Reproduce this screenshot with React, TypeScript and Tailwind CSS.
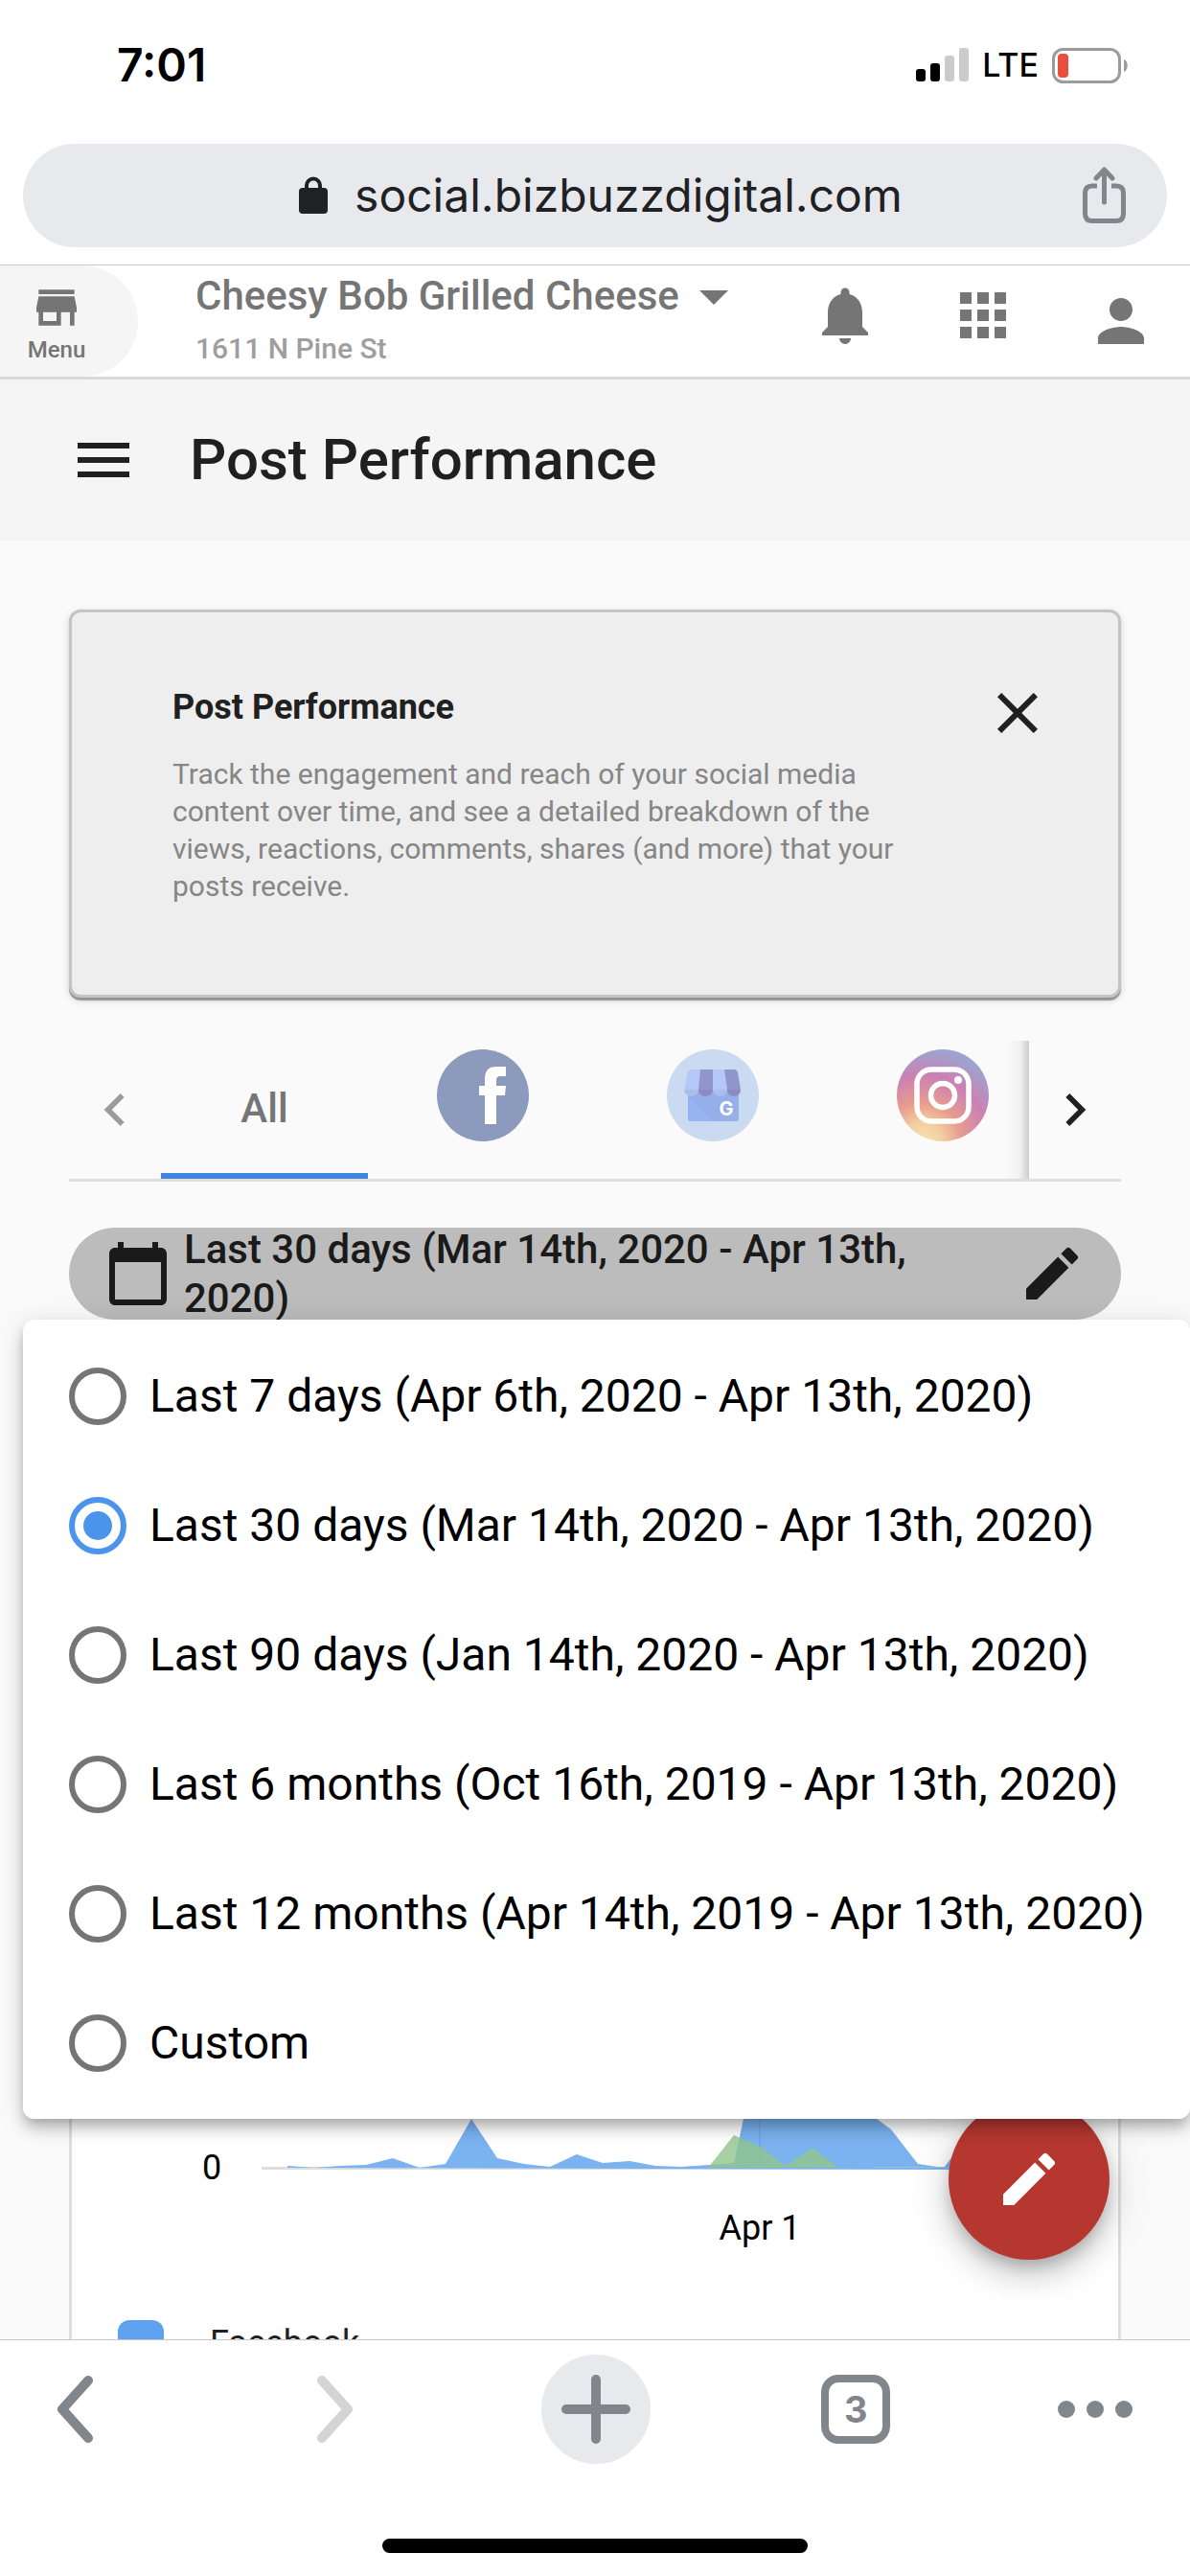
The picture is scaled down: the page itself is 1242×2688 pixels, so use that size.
import React, { useState } from "react";
import {
  MdApps,
  MdArrowDropDown,
  MdCalendarToday,
  MdChevronLeft,
  MdChevronRight,
  MdClose,
  MdCreate,
  MdMenu,
  MdNotifications,
  MdPerson,
  MdStore,
} from "react-icons/md";

const dateRanges = [
  { id: "7d", label: "Last 7 days (Apr 6th, 2020 - Apr 13th, 2020)" },
  { id: "30d", label: "Last 30 days (Mar 14th, 2020 - Apr 13th, 2020)" },
  { id: "90d", label: "Last 90 days (Jan 14th, 2020 - Apr 13th, 2020)" },
  { id: "6m", label: "Last 6 months (Oct 16th, 2019 - Apr 13th, 2020)" },
  { id: "12m", label: "Last 12 months (Apr 14th, 2019 - Apr 13th, 2020)" },
  { id: "custom", label: "Custom" },
];

const StatusBar: React.FC = () => (
  <div className="flex h-[150px] items-start justify-between pt-10 pr-16 pl-[122px] font-['Inter',sans-serif] text-black">
    <span className="text-[48px] leading-[56px] font-semibold">7:01</span>
    <div className="flex h-14 items-center gap-3.5">
      <svg className="h-9 w-[55px]" viewBox="0 0 55 36">
        <rect x="0" y="22" width="10" height="13" rx="3" />
        <rect x="15" y="16" width="10" height="19" rx="3" />
        <rect x="30" y="8" width="10" height="27" rx="3" fill="#cbcbcb" />
        <rect x="45" y="0" width="10" height="35" rx="3" fill="#cbcbcb" />
      </svg>
      <span className="text-[34px] leading-[56px] font-medium">LTE</span>
      <svg className="h-[37px] w-20" viewBox="0 0 80 37">
        <rect
          x="1.5"
          y="1.5"
          width="69"
          height="34"
          rx="10"
          fill="none"
          stroke="#9b9b9b"
          strokeWidth="3"
        />
        <rect x="6" y="6" width="11" height="25" rx="4" fill="#ea4e3d" />
        <path d="M75 12c5 2 5 11 0 13z" fill="#9b9b9b" />
      </svg>
    </div>
  </div>
);

const AddressBar: React.FC = () => (
  <div className="mx-6 mb-[18px] flex h-[108px] items-center rounded-full bg-[#e8e9ec] pr-[43px] pl-[100px]">
    <div className="flex flex-1 items-center justify-center gap-7 font-['Inter',sans-serif] text-[48px] leading-[60px] text-[#202124]">
      <svg className="h-10 w-[30px]" viewBox="0 0 30 40" fill="none">
        <path
          d="M8 16V9.500a7 7 0 0 1 14 0V16"
          stroke="#202124"
          strokeWidth="4"
        />
        <rect y="12" width="30" height="27" rx="4" fill="#202124" />
      </svg>
      <span>social.bizbuzzdigital.com</span>
    </div>
    <button type="button" aria-label="Share">
      <svg
        className="h-[60px] w-[45px]"
        viewBox="0 0 45 60"
        fill="none"
        stroke="#80868b"
        strokeWidth="5"
        strokeLinecap="round"
        strokeLinejoin="round"
      >
        <path
          d="M15 20H10q-7.500 0-7.500 7.500V49q0 7.500 7.500 7.500h25q7.500 0 7.500-7.500V27.500q0-7.500-7.500-7.500h-5"
          strokeLinecap="butt"
        />
        <path d="M22.500 37V4M14 12l8.500-9 8.500 9" />
      </svg>
    </button>
  </div>
);

const AppBar: React.FC = () => (
  <header className="flex h-30 items-stretch border-t border-b-3 border-t-[#c8c8c8] border-b-[#d9d9d9] bg-white text-[#757575]">
    <button
      type="button"
      className="flex w-36 flex-col items-center gap-0.5 rounded-r-full bg-[#f5f5f5] pt-4 pr-[26px]"
    >
      <MdStore className="size-14" />
      <span className="text-[24px] leading-7 font-medium">Menu</span>
    </button>
    <button
      type="button"
      className="flex flex-1 flex-col items-start gap-2 pt-[5px] pl-[60px]"
    >
      <span className="flex items-center text-[42px] leading-[54px] font-medium">
        Cheesy Bob Grilled Cheese
        <MdArrowDropDown className="-my-3 size-[72px]" />
      </span>
      <span className="text-[30px] leading-10 font-medium text-[#9e9e9e]">
        1611 N Pine St
      </span>
    </button>
    <nav className="flex items-start gap-[72px] pt-4 pr-9">
      <button type="button" aria-label="Notifications">
        <MdNotifications className="size-[72px]" />
      </button>
      <button type="button" aria-label="Apps">
        <MdApps className="size-[72px]" />
      </button>
      <button type="button" aria-label="Account" className="pt-1.5">
        <MdPerson className="size-[72px]" />
      </button>
    </nav>
  </header>
);

const InfoCard: React.FC = () => (
  <section className="flex h-[405px] items-start justify-between rounded-xl border-3 border-[#c4c4c4] bg-[#eeeeee] pt-[69px] pr-[69px] pl-[105px] shadow-[0_3px_1px_0_rgba(0,0,0,0.35),0_3px_9px_0_rgba(0,0,0,0.14)]">
    <div className="max-w-[770px]">
      <h2 className="pt-1.5 text-[36px] leading-[48px] font-bold text-[#202020]">
        Post Performance
      </h2>
      <p className="pt-[26px] text-[30px] leading-[39px] text-[#868686]">
        Track the engagement and reach of your social media content over time,
        and see a detailed breakdown of the views, reactions, comments, shares
        (and more) that your posts receive.
      </p>
    </div>
    <button type="button" aria-label="Close" className="text-[#202020]">
      <MdClose className="size-[72px]" />
    </button>
  </section>
);

const FacebookLogo: React.FC = () => (
  <svg className="size-24" viewBox="0 0 96 96">
    <circle cx="48" cy="48" r="48" fill="#8b9abd" />
    <path
      d="M50 78V48h-6V38h6v-7c0-9 4-13 12-13h10v10h-6c-3 0-4 2-4 4v6h10l-1 10h-9v30z"
      fill="#fff"
    />
  </svg>
);

const MyBusinessLogo: React.FC = () => (
  <svg className="size-24" viewBox="0 0 96 96">
    <circle cx="48" cy="48" r="48" fill="#cadaf1" />
    <path d="M22 40h53v32q0 3-3 3H25q-3 0-3-3z" fill="#96afe8" />
    <path d="M22 49l26 26H25q-3 0-3-3z" fill="#98b5f3" />
    <path d="M26 21h9l-2 21H18l4-18q1-3 4-3z" fill="#b3c8f6" />
    <path d="M35 21h13v21H33z" fill="#9096cc" />
    <path d="M48 21h12l3 21H48z" fill="#b3c8f6" />
    <path d="M60 21h10q3 0 4 3l3 18H63z" fill="#9096cc" />
    <path d="M18 42h15a7.500 7 0 0 1-15 0z" fill="#a9bee9" />
    <path d="M33 42h15a7.500 7 0 0 1-15 0z" fill="#898dc3" />
    <path d="M48 42h15a7.500 7 0 0 1-15 0z" fill="#a9bee9" />
    <path d="M63 42h14a7 7 0 0 1-14 0z" fill="#898dc3" />
    <text
      x="62"
      y="69"
      textAnchor="middle"
      className="fill-white font-['Inter',sans-serif] text-[20px] font-bold"
    >
      G
    </text>
  </svg>
);

const InstagramLogo: React.FC = () => (
  <svg className="size-24" viewBox="0 0 96 96">
    <defs>
      <radialGradient id="insta" cx="0.28" cy="1" r="1.05">
        <stop offset="0.05" stopColor="#f5dfa9" />
        <stop offset="0.2" stopColor="#f2cfa0" />
        <stop offset="0.4" stopColor="#e89c8d" />
        <stop offset="0.68" stopColor="#cc80b4" />
        <stop offset="0.96" stopColor="#9ba5cf" />
      </radialGradient>
    </defs>
    <circle cx="48" cy="48" r="48" fill="url(#insta)" />
    <g fill="none" stroke="#fff" strokeWidth="5.500">
      <rect x="21" y="21" width="54" height="54" rx="15" />
      <circle cx="48" cy="48" r="12.500" />
    </g>
    <circle cx="64" cy="32" r="4" fill="#fff" />
  </svg>
);

const NetworkTabs: React.FC = () => (
  <div
    role="tablist"
    className="mt-[45px] flex h-[147px] border-b-3 border-[#dedede]"
  >
    <button
      type="button"
      aria-label="Previous tabs"
      className="flex w-24 items-center justify-center text-[#9b9b9b]"
    >
      <MdChevronLeft className="size-[68px]" />
    </button>
    <div className="flex min-w-0 flex-1 overflow-hidden">
      <button
        type="button"
        role="tab"
        aria-selected="true"
        className="w-[216px] shrink-0 border-b-6 border-[#4285de] pt-0.5 text-center text-[42px] font-medium text-[#757575]"
      >
        All
      </button>
      {[
        { name: "Facebook", Logo: FacebookLogo },
        { name: "Google My Business", Logo: MyBusinessLogo },
        { name: "Instagram", Logo: InstagramLogo },
      ].map(({ name, Logo }) => (
        <button
          key={name}
          type="button"
          role="tab"
          aria-selected="false"
          aria-label={name}
          className="flex w-60 shrink-0 justify-center pt-[9px]"
        >
          <Logo />
        </button>
      ))}
    </div>
    <div className="relative w-24">
      <div className="absolute inset-y-0 -left-6 w-6 bg-linear-to-r from-transparent via-black/4 via-60% to-black/18" />
      <button
        type="button"
        aria-label="Next tabs"
        className="flex h-full w-24 items-center justify-center text-[#202020]"
      >
        <MdChevronRight className="size-[68px]" />
      </button>
    </div>
  </div>
);

const DateRangePicker: React.FC = () => {
  const [selected, setSelected] = useState("30d");

  return (
    <div className="relative z-20 mt-12">
      <button
        type="button"
        className="flex h-24 w-full items-center rounded-full bg-[#bcbcbc] px-9 text-left text-[#1a1a1a]"
      >
        <MdCalendarToday className="size-[72px] shrink-0" />
        <span className="flex-1 pr-20 pl-3 text-[42px] leading-[51px] font-medium">
          Last 30 days (Mar 14th, 2020 - Apr 13th, 2020)
        </span>
        <MdCreate className="size-[72px] shrink-0" />
      </button>
      <fieldset className="absolute top-full -right-[72px] -left-12 rounded-xl bg-white py-3 shadow-[0_6px_12px_-3px_rgba(0,0,0,0.2),0_12px_15px_0_rgba(0,0,0,0.14),0_3px_30px_0_rgba(0,0,0,0.12)]">
        {dateRanges.map(({ id, label }) => (
          <label
            key={id}
            className="flex h-[135px] items-center gap-6 pl-12 text-[48px] leading-[60px] whitespace-nowrap text-black"
          >
            <input
              type="radio"
              name="range"
              value={id}
              checked={selected === id}
              onChange={() => setSelected(id)}
              className="flex size-[60px] appearance-none items-center justify-center rounded-full border-6 border-[#757575] checked:border-[#4a94ec] checked:before:size-[30px] checked:before:rounded-full checked:before:bg-[#4a94ec] checked:before:content-['']"
            />
            {label}
          </label>
        ))}
      </fieldset>
    </div>
  );
};

const ChartCard: React.FC = () => (
  <section className="mt-12 border-3 border-[#dedede] bg-white">
    <svg className="w-full" viewBox="0 0 1092 993">
      <path d="M198 834.500H1018" stroke="#dedede" strokeWidth="3" />
      <path
        d="M225 834v-2l28 2 27-2 27-1 28-7 28 10 27-4 27-47 27 41 28 6 27 3 28-13 27 9 28-2 27 5 27 1 29-2 26-2 10-46 40-120 80 60 19 60 15 11 28 36 27 4 35-46v48z"
        fill="#7ab3f0"
      />
      <path d="M718 700V834" stroke="#70a9e8" strokeWidth="2" />
      <path
        d="M664 834l27-34 27 12 27 20 28-19 27 21z"
        fill="#91c58b"
        fillOpacity="0.8"
      />
      <path d="M838 833.500H915" stroke="#9dc4c4" />
      <text
        x="136"
        y="846"
        className="fill-black font-['Roboto',sans-serif] text-[36px]"
      >
        0
      </text>
      <text
        x="718"
        y="909"
        textAnchor="middle"
        className="fill-black font-['Roboto',sans-serif] text-[36px]"
      >
        Apr 1
      </text>
    </svg>
    <div className="flex h-12 items-center gap-12 pl-12 text-[36px] leading-[48px] text-[#202020]">
      <span className="size-12 rounded-xl bg-[#5ea2ef]" />
      Facebook
    </div>
  </section>
);

const BrowserToolbar: React.FC = () => (
  <footer className="relative z-30 flex h-[247px] shrink-0 flex-col border-t border-[#c8c8c8] bg-white">
    <nav className="flex items-center justify-between pt-[15px] pr-16 pl-[21px] text-[#80868b]">
      <button
        type="button"
        aria-label="Back"
        className="flex size-[114px] items-center justify-center"
      >
        <svg className="h-[72px] w-[38px]" viewBox="0 0 38 72" fill="none">
          <path
            d="M33 6L6 36l27 30"
            stroke="currentColor"
            strokeWidth="10"
            strokeLinecap="round"
            strokeLinejoin="round"
          />
        </svg>
      </button>
      <button
        type="button"
        aria-label="Forward"
        disabled
        className="flex size-[114px] items-center justify-center text-[#d4d4d4]"
      >
        <svg className="h-[72px] w-[38px]" viewBox="0 0 38 72" fill="none">
          <path
            d="M5 6l27 30L5 66"
            stroke="currentColor"
            strokeWidth="10"
            strokeLinecap="round"
            strokeLinejoin="round"
          />
        </svg>
      </button>
      <button
        type="button"
        aria-label="New tab"
        className="flex size-[114px] items-center justify-center rounded-full bg-[#e8e9ec]"
      >
        <svg className="size-[72px]" viewBox="0 0 72 72" fill="none">
          <path
            d="M36 5v62M5 36h62"
            stroke="currentColor"
            strokeWidth="10"
            strokeLinecap="round"
          />
        </svg>
      </button>
      <button
        type="button"
        aria-label="3 open tabs"
        className="flex size-[114px] items-center justify-center"
      >
        <span className="flex size-[72px] items-center justify-center rounded-[18px] border-8 border-[#80868b] font-['Inter',sans-serif] text-[38px] leading-[48px] font-bold">
          3
        </span>
      </button>
      <button
        type="button"
        aria-label="More"
        className="flex h-[114px] w-[70px] items-center justify-center"
      >
        <svg
          className="h-[18px] w-[78px] shrink-0"
          viewBox="0 0 78 18"
          fill="currentColor"
        >
          <circle cx="9" cy="9" r="9" />
          <circle cx="39" cy="9" r="9" />
          <circle cx="69" cy="9" r="9" />
        </svg>
      </button>
    </nav>
    <div className="mx-auto mt-auto mb-6 h-[15px] w-[444px] rounded-full bg-black" />
  </footer>
);

const App: React.FC = () => (
  <div className="flex h-screen flex-col overflow-hidden bg-white font-['Roboto',sans-serif]">
    <StatusBar />
    <AddressBar />
    <AppBar />
    <div className="flex h-[168px] shrink-0 items-center bg-[#f5f5f5] pl-[72px] text-[#202020]">
      <button type="button" aria-label="Open menu">
        <MdMenu className="size-[72px]" />
      </button>
      <h1 className="pl-[54px] text-[60px] leading-[72px] font-medium">
        Post Performance
      </h1>
    </div>
    <main className="relative min-h-0 flex-1 overflow-hidden bg-[#fafafa] px-[72px] pt-[72px]">
      <InfoCard />
      <NetworkTabs />
      <DateRangePicker />
      <ChartCard />
      <button
        type="button"
        aria-label="Compose post"
        className="absolute right-[84px] bottom-[83px] z-10 flex size-[168px] items-center justify-center rounded-full bg-[#b53730] text-white shadow-[0_9px_15px_-3px_rgba(0,0,0,0.2),0_18px_30px_0_rgba(0,0,0,0.14),0_3px_54px_0_rgba(0,0,0,0.12)]"
      >
        <MdCreate className="size-[72px]" />
      </button>
    </main>
    <BrowserToolbar />
  </div>
);

export default App;
